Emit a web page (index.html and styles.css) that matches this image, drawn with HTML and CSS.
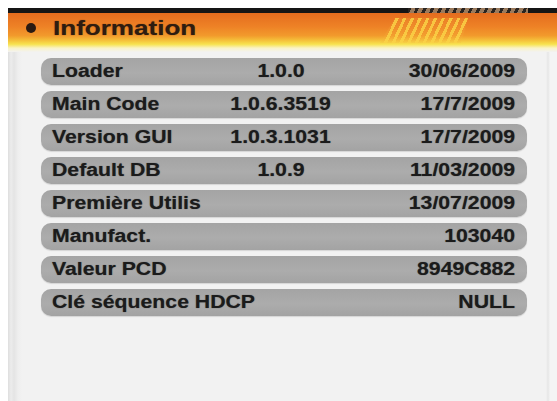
FILE: index.html
```html
<!DOCTYPE html>
<html>
<head>
<meta charset="utf-8">
<link rel="stylesheet" href="styles.css">
</head>
<body>
<div class="screen">
  <div class="header">
    <div class="band"><div class="band-hatch"></div></div>
    <div class="title-bar">
      <span class="bullet"></span>
      <span class="title">Information</span>
      <div class="hatch"></div>
    </div>
  </div>
  <div class="rows">
    <div class="row"><span class="c1"><b>Loader</b></span><span class="c2"><b>1.0.0</b></span><span class="c3"><b>30/06/2009</b></span></div>
    <div class="row"><span class="c1"><b>Main Code</b></span><span class="c2"><b>1.0.6.3519</b></span><span class="c3"><b>17/7/2009</b></span></div>
    <div class="row"><span class="c1"><b>Version GUI</b></span><span class="c2"><b>1.0.3.1031</b></span><span class="c3"><b>17/7/2009</b></span></div>
    <div class="row"><span class="c1"><b>Default DB</b></span><span class="c2"><b>1.0.9</b></span><span class="c3"><b>11/03/2009</b></span></div>
    <div class="row"><span class="c1"><b>Première Utilis</b></span><span class="c2"></span><span class="c3"><b>13/07/2009</b></span></div>
    <div class="row"><span class="c1"><b>Manufact.</b></span><span class="c2"></span><span class="c3"><b>103040</b></span></div>
    <div class="row"><span class="c1"><b>Valeur PCD</b></span><span class="c2"></span><span class="c3"><b>8949C882</b></span></div>
    <div class="row"><span class="c1"><b>Clé séquence HDCP</b></span><span class="c2"></span><span class="c3"><b>NULL</b></span></div>
  </div>
</div>
</body>
</html>
```
FILE: styles.css
```css
html, body {
  margin: 0;
  padding: 0;
  background: #ffffff;
}
body {
  padding: 8px 0 0 8px;
  font-family: "Liberation Sans", Arial, sans-serif;
}
.screen {
  width: 549px;
  height: 393px;
  background:
    linear-gradient(to right, #dedede 0, #ececec 3px, #e4e4e4 6px, #eeeeee 10px, #f2f2f2 14px, #f2f2f2 538px, #e6e6e6 540px, #f4f4f4 542px);
  overflow: hidden;
}
.header {
  height: 44px;
  display: flex;
  flex-direction: column;
}
.band {
  height: 5px;
  background: #151515;
  position: relative;
}
.band-hatch {
  position: absolute;
  left: 400px;
  top: 0;
  width: 120px;
  height: 5px;
  background: repeating-linear-gradient(115deg, #2a2420 0 3px, #9a7a5c 3px 7px);
}
.title-bar {
  flex: 1;
  position: relative;
  display: flex;
  align-items: flex-start;
  background: linear-gradient(to bottom, #e46c1e 0%, #ee8226 35%, #f29a2c 58%, #f5c03a 70%, #f7e24e 80%, #faf3c6 90%, #f2f2f2 100%);
}
.bullet {
  width: 10px;
  height: 10px;
  border-radius: 50%;
  background: #2a1a12;
  margin: 10px 0 0 18px;
}
.title {
  display: inline-block;
  margin: 3px 0 0 17px;
  font-weight: bold;
  font-size: 21px;
  line-height: 24px;
  color: #2e1c10;
  transform: scaleX(1.24);
  transform-origin: left center;
  text-shadow: 0 0 1px rgba(40, 20, 10, 0.6);
}
.hatch {
  position: absolute;
  left: 372px;
  top: 5px;
  width: 88px;
  height: 25px;
  clip-path: polygon(15px 0, 88px 0, 81px 100%, 0 100%);
  background: repeating-linear-gradient(115deg, rgba(250, 210, 70, 0.85) 0 3px, rgba(245, 180, 60, 0.2) 3px 7px);
}
.rows {
  display: flex;
  flex-direction: column;
  gap: 6px;
  padding: 6px 0 0 33px;
}
.row {
  width: 486px;
  height: 27px;
  box-sizing: border-box;
  padding: 0 12px 0 11px;
  border-radius: 10px;
  background: linear-gradient(to bottom, #a4a4a4 0%, #acacac 55%, #a3a3a3 100%);
  box-shadow: 0 1px 1px rgba(0, 0, 0, 0.12);
  display: grid;
  grid-template-columns: 169px 120px 1fr;
  align-items: center;
  font-size: 18px;
  line-height: 27px;
  color: #1b1b1b;
  white-space: nowrap;
}
.row b {
  display: inline-block;
  font-weight: bold;
  transform: scaleX(1.18);
  text-shadow: 0 0 1px rgba(0, 0, 0, 0.5);
}
.c1 { text-align: left; }
.c1 b { transform-origin: left center; }
.c2 { text-align: center; }
.c2 b { transform-origin: center center; }
.c3 { text-align: right; }
.c3 b { transform-origin: right center; }
```
